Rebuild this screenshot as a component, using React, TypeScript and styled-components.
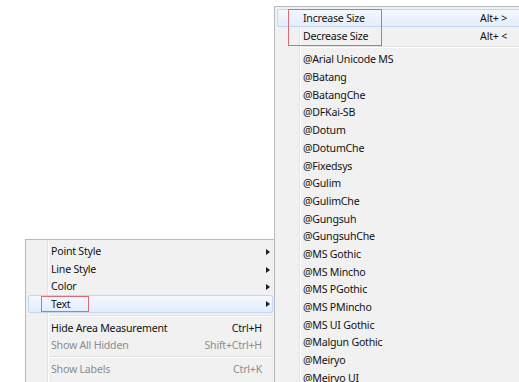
import React from 'react';
import styled, { createGlobalStyle, css } from 'styled-components';

const GlobalStyle = createGlobalStyle`
    html, body {
        margin: 0;
        padding: 0;
        background: #ffffff;
    }
    body {
        font-family: "Noto Sans", "Open Sans", sans-serif;
        font-size: 10.6px;
        letter-spacing: -0.22px;
        color: #111111;
    }
`;

const Desktop = styled.div`
    position: relative;
    width: 519px;
    height: 382px;
    overflow: hidden;
    background: #ffffff;
`;

/* each popup floats over the page at its own spot */
const Menu = styled.div<{ $left: number; $top: number; $width: number; $gutter: number }>`
    position: absolute;
    left: ${(p) => p.$left}px;
    top: ${(p) => p.$top}px;
    width: ${(p) => p.$width}px;
    box-sizing: border-box;
    padding: 2px;
    display: flex;
    flex-direction: column;
    border: 1px solid #b9b9b9;
    background-color: #f1f1f1;
    background-image: linear-gradient(
        to right,
        transparent ${(p) => p.$gutter - 1}px,
        #e2e3e3 ${(p) => p.$gutter - 1}px,
        #e2e3e3 ${(p) => p.$gutter}px,
        #ffffff ${(p) => p.$gutter}px,
        #ffffff ${(p) => p.$gutter + 1}px,
        transparent ${(p) => p.$gutter + 1}px
    );
`;

const Row = styled.div<{ $hot?: boolean; $disabled?: boolean; $indent: number; $right: number }>`
    display: grid;
    grid-template-columns: 1fr auto 10px;
    align-items: center;
    height: 17.7px;
    line-height: 17.7px;
    box-sizing: border-box;
    padding-left: ${(p) => p.$indent}px;
    padding-right: ${(p) => p.$right}px;
    white-space: nowrap;
    border: 1px solid transparent;
    border-radius: 2px;
    color: ${(p) => (p.$disabled ? '#8c8c8c' : '#111111')};
    ${(p) =>
        p.$hot &&
        css`
            background: linear-gradient(#f3f8fe, #e3edfa);
            border-color: #c3d7f1;
        `}
`;

const Label = styled.span`
    display: flex;
    align-items: center;
`;

const Shortcut = styled.span`
    text-align: right;
`;

const Arrow = styled.span`
    justify-self: end;
    margin-right: 2px;
    width: 0;
    height: 0;
    border-top: 3.5px solid transparent;
    border-bottom: 3.5px solid transparent;
    border-left: 4px solid #1b1b1b;
`;

const Separator = styled.div<{ $from: number }>`
    height: 6px;
    display: flex;
    align-items: center;
    padding-left: ${(p) => p.$from}px;

    &::before {
        content: '';
        flex: 1;
        height: 1px;
        border-bottom: 1px solid #ffffff;
        background: #e0e0e0;
    }
`;

/* red annotation boxes drawn over the menu */
const Group = styled.div`
    position: relative;
    display: flex;
    flex-direction: column;
`;

const Annotation = styled.div<{ $left: number; $width: number; $height: number }>`
    position: absolute;
    left: ${(p) => p.$left}px;
    top: 0;
    width: ${(p) => p.$width}px;
    height: ${(p) => p.$height}px;
    box-sizing: border-box;
    border: 1px solid #dc6a77;
    pointer-events: none;
`;

const Marked = styled.span`
    display: inline-block;
    box-sizing: border-box;
    margin-left: -10px;
    padding-left: 9px;
    width: 48px;
    height: 16px;
    line-height: 14px;
    border: 1px solid #dc6a77;
`;

interface Item {
    label: string;
    shortcut?: string;
    submenu?: boolean;
    disabled?: boolean;
    hot?: boolean;
    marked?: boolean;
}

const mainItems: (Item | 'sep')[] = [
    { label: 'Point Style', submenu: true },
    { label: 'Line Style', submenu: true },
    { label: 'Color', submenu: true },
    { label: 'Text', submenu: true, hot: true, marked: true },
    'sep',
    { label: 'Hide Area Measurement', shortcut: 'Ctrl+H' },
    { label: 'Show All Hidden', shortcut: 'Shift+Ctrl+H', disabled: true },
    'sep',
    { label: 'Show Labels', shortcut: 'Ctrl+K', disabled: true },
    { label: '' },
];

const fonts = [
    '@Arial Unicode MS',
    '@Batang',
    '@BatangChe',
    '@DFKai-SB',
    '@Dotum',
    '@DotumChe',
    '@Fixedsys',
    '@Gulim',
    '@GulimChe',
    '@Gungsuh',
    '@GungsuhChe',
    '@MS Gothic',
    '@MS Mincho',
    '@MS PGothic',
    '@MS PMincho',
    '@MS UI Gothic',
    '@Malgun Gothic',
    '@Meiryo',
    '@Meiryo UI',
];

export default function App() {
    return (
        <>
            <GlobalStyle />
            <Desktop>
                <Menu $left={25} $top={239} $width={251} $gutter={22}>
                    {mainItems.map((item, i) =>
                        item === 'sep' ? (
                            <Separator key={i} $from={22} />
                        ) : (
                            buildRow(item, i, 22, 0)
                        )
                    )}
                </Menu>

                <Menu $left={274} $top={6} $width={250} $gutter={25}>
                    <Group>
                        {buildRow({ label: 'Increase Size', shortcut: 'Alt+ >', hot: true }, 'inc', 25, 3)}
                        {buildRow({ label: 'Decrease Size', shortcut: 'Alt+ <' }, 'dec', 25, 3)}
                        <Annotation $left={11} $width={94} $height={37} />
                    </Group>
                    <Separator $from={25} />
                    {fonts.map((name) => buildRow({ label: name }, name, 25, 3))}
                </Menu>
            </Desktop>
        </>
    );

    function buildRow(item: Item, key: string | number, indent: number, right: number) {
        return (
            <Row key={key} $hot={item.hot} $disabled={item.disabled} $indent={indent} $right={right}>
                <Label>{item.marked ? <Marked>{item.label}</Marked> : item.label}</Label>
                <Shortcut>{item.shortcut}</Shortcut>
                {item.submenu ? <Arrow /> : <span />}
            </Row>
        );
    }
}
